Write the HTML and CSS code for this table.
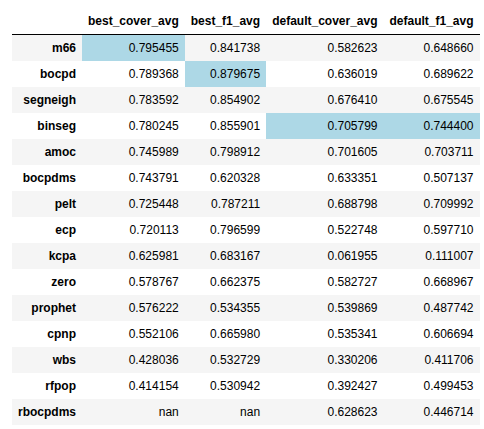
FILE: index.html
```html
<!DOCTYPE html>
<html>
<head>
<meta charset="utf-8">
<link rel="stylesheet" href="styles.css">
</head>
<body>
<div class="output">
<table class="df">
<thead>
<tr><th></th><th>best_cover_avg</th><th>best_f1_avg</th><th>default_cover_avg</th><th>default_f1_avg</th></tr>
</thead>
<tbody>
<tr><th>m66</th><td class="hl">0.795455</td><td>0.841738</td><td>0.582623</td><td>0.648660</td></tr>
<tr><th>bocpd</th><td>0.789368</td><td class="hl">0.879675</td><td>0.636019</td><td>0.689622</td></tr>
<tr><th>segneigh</th><td>0.783592</td><td>0.854902</td><td>0.676410</td><td>0.675545</td></tr>
<tr><th>binseg</th><td>0.780245</td><td>0.855901</td><td class="hl">0.705799</td><td class="hl">0.744400</td></tr>
<tr><th>amoc</th><td>0.745989</td><td>0.798912</td><td>0.701605</td><td>0.703711</td></tr>
<tr><th>bocpdms</th><td>0.743791</td><td>0.620328</td><td>0.633351</td><td>0.507137</td></tr>
<tr><th>pelt</th><td>0.725448</td><td>0.787211</td><td>0.688798</td><td>0.709992</td></tr>
<tr><th>ecp</th><td>0.720113</td><td>0.796599</td><td>0.522748</td><td>0.597710</td></tr>
<tr><th>kcpa</th><td>0.625981</td><td>0.683167</td><td>0.061955</td><td>0.111007</td></tr>
<tr><th>zero</th><td>0.578767</td><td>0.662375</td><td>0.582727</td><td>0.668967</td></tr>
<tr><th>prophet</th><td>0.576222</td><td>0.534355</td><td>0.539869</td><td>0.487742</td></tr>
<tr><th>cpnp</th><td>0.552106</td><td>0.665980</td><td>0.535341</td><td>0.606694</td></tr>
<tr><th>wbs</th><td>0.428036</td><td>0.532729</td><td>0.330206</td><td>0.411706</td></tr>
<tr><th>rfpop</th><td>0.414154</td><td>0.530942</td><td>0.392427</td><td>0.499453</td></tr>
<tr><th>rbocpdms</th><td>nan</td><td>nan</td><td>0.628623</td><td>0.446714</td></tr>
</tbody>
</table>
</div>
</body>
</html>
```
FILE: styles.css
```css
html, body {
  margin: 0;
  padding: 0;
  background: #ffffff;
}
body {
  font-family: "Liberation Sans", Arial, sans-serif;
  font-size: 12px;
  color: #000000;
}
.output {
  padding: 8px 0 0 12px;
}
.df {
  border: none;
  border-collapse: collapse;
  border-spacing: 0;
  color: #000000;
  font-size: 12px;
}
.df thead {
  border-bottom: 1px solid #000000;
  vertical-align: bottom;
}
.df th,
.df td {
  text-align: right;
  vertical-align: middle;
  padding: 6px 6px;
  line-height: normal;
  white-space: nowrap;
  border: none;
}
.df th {
  font-weight: bold;
}
.df tbody tr:nth-child(odd) {
  background: #f5f5f5;
}
.df td.hl {
  background: #add8e6;
}
```
